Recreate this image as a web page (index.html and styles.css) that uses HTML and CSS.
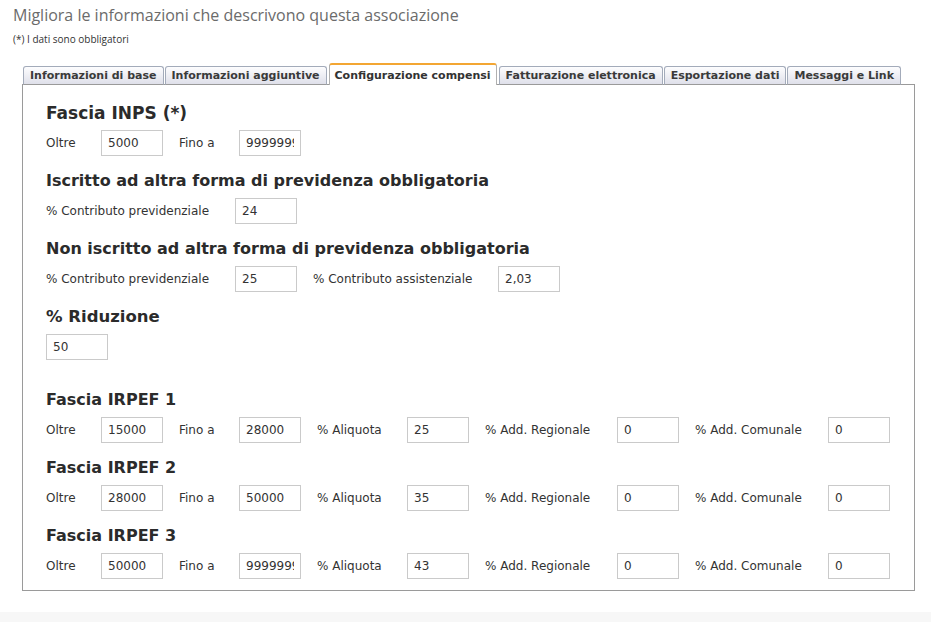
FILE: index.html
```html
<!DOCTYPE html>
<html lang="it">
<head>
<meta charset="utf-8">
<title>Configurazione compensi</title>
<link rel="stylesheet" href="styles.css">
</head>
<body>
<div class="page">
  <h1 class="title">Migliora le informazioni che descrivono questa associazione</h1>
  <p class="note">(*) I dati sono obbligatori</p>
  <div class="tabbox">
    <ul class="tabs">
      <li class="tab">Informazioni di base</li>
      <li class="tab">Informazioni aggiuntive</li>
      <li class="tab active">Configurazione compensi</li>
      <li class="tab">Fatturazione elettronica</li>
      <li class="tab">Esportazione dati</li>
      <li class="tab">Messaggi e Link</li>
    </ul>
    <div class="panel">
      <section class="sec">
        <h2 class="h big">Fascia INPS (*)</h2>
        <div class="row">
          <label class="lb w-oltre">Oltre</label><input class="in" value="5000">
          <label class="lb w-fino">Fino a</label><input class="in" value="999999999">
        </div>
      </section>
      <section class="sec">
        <h2 class="h">Iscritto ad altra forma di previdenza obbligatoria</h2>
        <div class="row">
          <label class="lb w-prev">% Contributo previdenziale</label><input class="in" value="24">
        </div>
      </section>
      <section class="sec">
        <h2 class="h">Non iscritto ad altra forma di previdenza obbligatoria</h2>
        <div class="row">
          <label class="lb w-prev">% Contributo previdenziale</label><input class="in" value="25">
          <label class="lb w-ass">% Contributo assistenziale</label><input class="in" value="2,03">
        </div>
      </section>
      <section class="sec sec-gap">
        <h2 class="h mid">% Riduzione</h2>
        <div class="row">
          <input class="in" value="50">
        </div>
      </section>
      <section class="sec">
        <h2 class="h">Fascia IRPEF 1</h2>
        <div class="row">
          <label class="lb w-oltre">Oltre</label><input class="in" value="15000">
          <label class="lb w-fino">Fino a</label><input class="in" value="28000">
          <label class="lb w-aliq">% Aliquota</label><input class="in" value="25">
          <label class="lb w-reg">% Add. Regionale</label><input class="in" value="0">
          <label class="lb w-com">% Add. Comunale</label><input class="in" value="0">
        </div>
      </section>
      <section class="sec">
        <h2 class="h">Fascia IRPEF 2</h2>
        <div class="row">
          <label class="lb w-oltre">Oltre</label><input class="in" value="28000">
          <label class="lb w-fino">Fino a</label><input class="in" value="50000">
          <label class="lb w-aliq">% Aliquota</label><input class="in" value="35">
          <label class="lb w-reg">% Add. Regionale</label><input class="in" value="0">
          <label class="lb w-com">% Add. Comunale</label><input class="in" value="0">
        </div>
      </section>
      <section class="sec">
        <h2 class="h">Fascia IRPEF 3</h2>
        <div class="row">
          <label class="lb w-oltre">Oltre</label><input class="in" value="50000">
          <label class="lb w-fino">Fino a</label><input class="in" value="999999999">
          <label class="lb w-aliq">% Aliquota</label><input class="in" value="43">
          <label class="lb w-reg">% Add. Regionale</label><input class="in" value="0">
          <label class="lb w-com">% Add. Comunale</label><input class="in" value="0">
        </div>
      </section>
    </div>
  </div>
</div>
<div class="strip"></div>
</body>
</html>
```

FILE: styles.css
```css
html, body {
  margin: 0;
  padding: 0;
  background: #fff;
}

.page {
  padding: 0 16px 0 13px;
}

.title {
  margin: 5px 0 0;
  font-family: "Open Sans", sans-serif;
  font-weight: 400;
  font-size: 16px;
  line-height: 20px;
  color: #6b6b6b;
}

.note {
  margin: 8px 0 0;
  font-family: "Open Sans", sans-serif;
  font-size: 10px;
  line-height: 12px;
  color: #333;
}

.tabbox {
  margin: 18px 0 0 9px;
  width: 893px;
}

.tabs {
  list-style: none;
  margin: 0 0 -1px;
  padding: 0 0 0 1px;
  display: flex;
  align-items: flex-end;
  gap: 1px;
  position: relative;
  z-index: 1;
}

.tab {
  font-family: Verdana, "DejaVu Sans", sans-serif;
  font-weight: bold;
  font-size: 11px;
  line-height: 15px;
  color: #3a3a3a;
  padding: 1px 6px;
  border: 1px solid #a3abba;
  border-bottom-color: #9a9a9a;
  border-radius: 3px 3px 0 0;
  background: linear-gradient(#fdfdfe, #dfe0ea);
  white-space: nowrap;
}

.tab.active {
  margin: 0 1px;
  padding: 3px 5px 2px;
  border-top: 2px solid #f3a633;
  border-bottom: none;
  border-left-color: #b0b0b0;
  border-right-color: #b0b0b0;
  background: #fff;
  color: #333;
}

.panel {
  border: 1px solid #9a9a9a;
  padding: 17px 20px 11px 23px;
  background: #fff;
}

.sec {
  margin: 0;
}

.sec-gap {
  padding-bottom: 15px;
}

.h {
  margin: 0 0 6px;
  font-family: Verdana, "DejaVu Sans", sans-serif;
  font-weight: bold;
  font-size: 16px;
  line-height: 22px;
  color: #2b2b2b;
}

.h.big {
  font-size: 17px;
}

.h.mid {
  font-size: 16.5px;
}

.row {
  display: flex;
  align-items: center;
  height: 26px;
  margin-bottom: 14px;
}

.sec:last-child .row {
  margin-bottom: 0;
}

.lb {
  font-family: Verdana, "DejaVu Sans", sans-serif;
  font-size: 12px;
  color: #333;
  white-space: nowrap;
  flex: none;
}

.w-oltre { width: 55px; }
.w-fino { width: 60px; }
.w-aliq { width: 90px; }
.w-reg { width: 132px; }
.w-com { width: 133px; }
.w-prev { width: 189px; }
.w-ass { width: 185px; }

.in {
  box-sizing: border-box;
  width: 62px;
  height: 26px;
  margin: 0 16px 0 0;
  padding: 0 6px;
  border: 1px solid #cacaca;
  border-radius: 0;
  background: #fff;
  font-family: Verdana, "DejaVu Sans", sans-serif;
  font-size: 12px;
  color: #333;
  flex: none;
}

.strip {
  margin-top: 21px;
  height: 10px;
  background: #f7f7f7;
}
```
